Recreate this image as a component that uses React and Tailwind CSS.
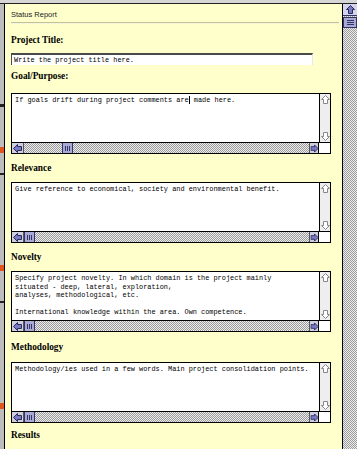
import React from 'react';

const mono = { fontFamily: '"Liberation Mono", monospace' };

const checker =
  'bg-[image:repeating-conic-gradient(#9c9c9c_0%_25%,#ececec_0%_50%)] bg-[length:2px_2px]';

function ArrowLeft({ hollow }) {
  return (
    <svg width="9" height="9" viewBox="0 0 9 9">
      <polygon
        points="0.5,4.5 4.5,0.5 4.5,2.5 8.5,2.5 8.5,6.5 4.5,6.5 4.5,8.5"
        fill={hollow ? '#fff' : '#7a7ac4'}
        stroke={hollow ? '#888' : '#2b2b5a'}
        strokeWidth="1"
      />
    </svg>
  );
}

function ArrowRight({ hollow }) {
  return (
    <svg width="9" height="9" viewBox="0 0 9 9">
      <polygon
        points="8.5,4.5 4.5,0.5 4.5,2.5 0.5,2.5 0.5,6.5 4.5,6.5 4.5,8.5"
        fill={hollow ? '#fff' : '#7a7ac4'}
        stroke={hollow ? '#888' : '#2b2b5a'}
        strokeWidth="1"
      />
    </svg>
  );
}

function ArrowUp({ hollow }) {
  return (
    <svg width="9" height="9" viewBox="0 0 9 9">
      <polygon
        points="4.5,0.5 8.5,4.5 6.5,4.5 6.5,8.5 2.5,8.5 2.5,4.5 0.5,4.5"
        fill={hollow ? '#fff' : '#7a7ac4'}
        stroke={hollow ? '#888' : '#2b2b5a'}
        strokeWidth="1"
      />
    </svg>
  );
}

function ArrowDown({ hollow }) {
  return (
    <svg width="9" height="9" viewBox="0 0 9 9">
      <polygon
        points="4.5,8.5 8.5,4.5 6.5,4.5 6.5,0.5 2.5,0.5 2.5,4.5 0.5,4.5"
        fill={hollow ? '#fff' : '#7a7ac4'}
        stroke={hollow ? '#888' : '#2b2b5a'}
        strokeWidth="1"
      />
    </svg>
  );
}

function Label({ children, className = '' }) {
  return (
    <div
      className={`text-[9.3px] leading-[12px] font-bold text-black ${className}`}
      style={{ fontFamily: '"Liberation Serif", serif' }}
    >
      {children}
    </div>
  );
}

function TextBox({ children, thumbOffset = false, className = '' }) {
  return (
    <div className={`w-[320px] h-[61px] border border-black bg-white flex flex-col ${className}`}>
      <div className="flex flex-1 min-h-0">
        <div
          className="flex-1 pl-[3px] pt-[2px] text-[6.9px] leading-[8.5px] text-black whitespace-pre overflow-hidden"
          style={mono}
        >
          {children}
        </div>
        <div className="w-[11px] border-l border-black bg-[#eeeeee] flex flex-col justify-between items-center py-px">
          <ArrowUp hollow />
          <ArrowDown hollow />
        </div>
      </div>
      <div className="h-[11px] border-t border-black flex">
        <div className="w-[11px] bg-[#cfcfe0] flex items-center justify-center">
          <ArrowLeft />
        </div>
        <div className={`flex-1 ${checker} border-l border-[#555]`}>
          <div
            className={`w-[11px] h-full bg-[#a9a9d6] border-x border-[#333366] flex items-center justify-center gap-px ${thumbOffset ? 'ml-[38px]' : ''}`}
          >
            <div className="w-px h-[5px] bg-[#333366]" />
            <div className="w-px h-[5px] bg-[#333366]" />
            <div className="w-px h-[5px] bg-[#333366]" />
          </div>
        </div>
        <div className="w-[9px] bg-[#cfcfe0] border-l border-[#555] flex items-center justify-center">
          <div className="scale-90">
            <ArrowRight />
          </div>
        </div>
        <div className="w-[12px] border-l border-black bg-white" />
      </div>
    </div>
  );
}

export default function App() {
  return (
    <div className="w-[357px] h-[449px] overflow-hidden flex flex-col bg-[#cfcfcf]">
      <div className="h-[3px] bg-[#d6d6d6]" />
      <div className="flex flex-1 min-h-0 border-t border-[#222]">
        {/* background window edge */}
        <div className="w-[4px] bg-[#bdbdbd] flex flex-col">
          <div className="h-[100px]" />
          <div className="h-[3px] bg-[#222]" />
          <div className="h-[40px]" />
          <div className="h-[6px] bg-[#e0561c]" />
          <div className="h-[20px]" />
          <div className="h-[2px] bg-[#222]" />
          <div className="h-[90px]" />
          <div className="h-[6px] bg-[#e0561c]" />
          <div className="h-[30px]" />
          <div className="h-[2px] bg-[#222]" />
          <div className="h-[100px]" />
          <div className="h-[6px] bg-[#e0561c]" />
        </div>

        {/* page content */}
        <div className="flex-1 bg-[#ffffcc] border-l border-black pl-[6px] pr-[3px]">
          <div
            className="h-[18px] pt-[6px] text-[7.5px] leading-[9px] text-[#222]"
            style={{ fontFamily: '"Liberation Sans", Arial, sans-serif' }}
          >
            Status Report
          </div>
          <div className="h-[2px] border-t border-[#c4c492] border-b border-b-[#f4f4e0]" />

          <Label className="mt-[10px]">Project Title:</Label>
          <div
            className="mt-[7px] w-[302px] h-[12px] bg-white border-t-2 border-t-[#4a4a4a] border-l border-l-[#4a4a4a] border-r border-r-[#e8e8e8] pl-[2px] text-[6.9px] leading-[10px] text-black whitespace-pre"
            style={mono}
          >
            Write the project title here.
          </div>

          <Label className="mt-[5px]">Goal/Purpose:</Label>
          <TextBox className="mt-[11px]" thumbOffset>
            {'If goals drift during project comments are'}
            <span className="border-r border-black" />
            {' made here.'}
          </TextBox>

          <Label className="mt-[8px]">Relevance</Label>
          <TextBox className="mt-[8px]">
            {'Give reference to economical, society and environmental benefit.'}
          </TextBox>

          <Label className="mt-[8px]">Novelty</Label>
          <TextBox className="mt-[8px]">
            {'Specify project novelty. In which domain is the project mainly\nsituated - deep, lateral, exploration,\nanalyses, methodological, etc.\n\nInternational knowledge within the area. Own competence.'}
          </TextBox>

          <Label className="mt-[9px]">Methodology</Label>
          <TextBox className="mt-[9px]">
            {'Methodology/ies used in a few words. Main project consolidation points.'}
          </TextBox>

          <Label className="mt-[6px]">Results</Label>
        </div>

        {/* window scroll bar */}
        <div className="w-[15px] border-l border-black flex flex-col">
          <div className="h-[12px] bg-[#d4d4ee] border-b border-[#333366] flex items-center justify-center">
            <ArrowUp />
          </div>
          <div className={`flex-1 ${checker}`}>
            <div className="mt-px h-[11px] bg-[#a9a9d6] border border-[#333366] flex flex-col items-center justify-center gap-px">
              <div className="w-[7px] h-px bg-[#333366]" />
              <div className="w-[7px] h-px bg-[#333366]" />
              <div className="w-[7px] h-px bg-[#333366]" />
            </div>
          </div>
        </div>
      </div>
    </div>
  );
}
